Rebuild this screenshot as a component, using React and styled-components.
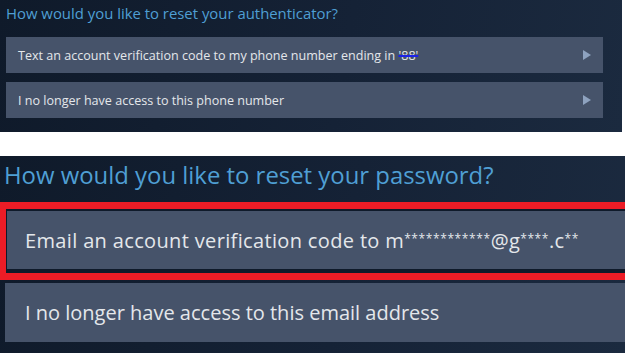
import React from 'react'
import styled, { createGlobalStyle } from 'styled-components'

const Global = createGlobalStyle`
  body {
    margin: 0;
    background: #ffffff;
    font-family: "Open Sans", "Liberation Sans", Arial, sans-serif;
  }
`

const Page = styled.div`
  width: 625px;
  height: 353px;
  display: flex;
  flex-direction: column;
  gap: 24px;
`

const Panel = styled.section`
  box-sizing: border-box;
  background: linear-gradient(100deg, #0f1a2a 0%, #152236 55%, #1b2a3f 100%);
  overflow: hidden;
`

const TopPanel = styled(Panel)`
  width: 622px;
  height: 132px;
  padding: 4px 19px 0 6px;
`

const BottomPanel = styled(Panel)`
  width: 625px;
  height: 197px;
`

const SmallTitle = styled.h2`
  margin: 0;
  height: 18px;
  font-size: 14.9px;
  line-height: 18px;
  font-weight: 400;
  color: #4f9fd4;
  white-space: nowrap;
`

const BigTitle = styled.h2`
  margin: 6px 0 14px 4px;
  height: 26px;
  font-size: 23.9px;
  line-height: 26px;
  font-weight: 400;
  color: #4f9fd4;
  white-space: nowrap;
`

const SmallList = styled.div`
  margin-top: 15px;
  display: flex;
  flex-direction: column;
  gap: 9px;
`

const SmallOption = styled.div`
  height: 36px;
  box-sizing: border-box;
  padding: 0 12px;
  display: flex;
  align-items: center;
  justify-content: space-between;
  background: #46536a;
  color: #e4e7eb;
  font-size: 12.55px;
  white-space: nowrap;
`

const Arrow = styled.span`
  width: 0;
  height: 0;
  border-left: 8px solid #8ea2bf;
  border-top: 5.5px solid transparent;
  border-bottom: 5.5px solid transparent;
`

const Redacted = styled.span`
  text-decoration: line-through;
  text-decoration-color: #1d22e8;
  text-decoration-thickness: 2px;
`

const Highlight = styled.div`
  width: 680px;
  box-sizing: border-box;
  border: 7px solid #ec1c26;
  border-left-width: 6px;
  padding: 2px 0 4px 1px;
  background: #0f1a2a;
`

const BigOption = styled.div`
  width: ${p => p.$width}px;
  height: ${p => p.$height}px;
  box-sizing: border-box;
  margin-left: ${p => p.$offset || 0}px;
  padding-left: ${p => p.$pad}px;
  display: flex;
  align-items: center;
  background: #46536a;
  color: #e4e7eb;
  font-size: 20px;
  white-space: nowrap;
`

const EmailText = styled.span`
  letter-spacing: 0.35px;
`

const Mask = styled.span`
  font-size: 12px;
  letter-spacing: 0.6px;
  vertical-align: 5px;
`

const Spacer = styled.div`
  height: 3px;
`

export default function App() {
  return (
    <Page>
      <Global />
      <TopPanel>
        <SmallTitle>How would you like to reset your authenticator?</SmallTitle>
        <SmallList>
          <SmallOption>
            <span>
              Text an account verification code to my phone number ending in <Redacted>'88'</Redacted>
            </span>
            <Arrow />
          </SmallOption>
          <SmallOption>
            <span>I no longer have access to this phone number</span>
            <Arrow />
          </SmallOption>
        </SmallList>
      </TopPanel>
      <BottomPanel>
        <BigTitle>How would you like to reset your password?</BigTitle>
        <Highlight>
          <BigOption $width={660} $height={58} $pad={18}>
            <EmailText>
              Email an account verification code to m<Mask>************</Mask>@g<Mask>****</Mask>.c<Mask>**</Mask>
            </EmailText>
          </BigOption>
        </Highlight>
        <Spacer />
        <BigOption $width={660} $height={59} $pad={20} $offset={5}>
          I no longer have access to this email address
        </BigOption>
      </BottomPanel>
    </Page>
  )
}
